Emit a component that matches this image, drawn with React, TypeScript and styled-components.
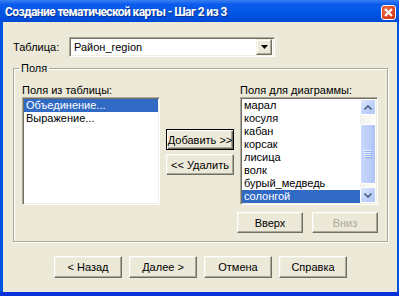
import React from 'react';
import styled, { createGlobalStyle } from 'styled-components';

const GlobalStyle = createGlobalStyle`
  html, body {
    margin: 0;
    padding: 0;
    background: #ffffff;
  }
  body {
    font-family: "Liberation Sans", Arial, sans-serif;
    font-size: 11px;
    color: #000;
  }
  * { box-sizing: border-box; }
`;

const Window = styled.div`
  width: 399px;
  height: 296px;
  display: flex;
  flex-direction: column;
  background: #0052e0;
  border-bottom: 4px solid #0831d9;
`;

const TitleBar = styled.div`
  height: 22px;
  display: flex;
  align-items: center;
  padding: 2px 2px 0 5px;
  background: linear-gradient(#3a80f3 0%, #0b5ced 20%, #0055e5 60%, #0048d6 100%);
  color: #ffffff;
  font-family: Roboto, "Liberation Sans", sans-serif;
  font-weight: bold;
  font-size: 12px;
  letter-spacing: -0.6px;
  text-shadow: 1px 1px #0a2f8e;
`;

const TitleText = styled.span`
  flex: 1;
  white-space: nowrap;
`;

const CloseButton = styled.div`
  width: 15px;
  height: 15px;
  margin-right: 1px;
  border: 1px solid #ffffff;
  border-radius: 3px;
  background: radial-gradient(circle at 35% 35%, #ec7a58, #dd4420 55%, #bf3410);
  display: flex;
  align-items: center;
  justify-content: center;
`;

const Client = styled.div`
  flex: 1;
  margin: 0 2px 0 3px;
  background: #ece9d8;
  display: flex;
  flex-direction: column;
  padding: 15px 9px 0 10px;
`;

const TableRow = styled.div`
  display: flex;
  align-items: center;
  height: 20px;
`;

const FieldLabel = styled.span`
  width: 56px;
  line-height: 13px;
`;

const Combo = styled.div`
  width: 206px;
  height: 20px;
  display: flex;
  align-items: center;
  background: #ffffff;
  border: 1px solid;
  border-color: #aca899 #ffffff #ffffff #aca899;
  box-shadow: inset 1px 1px #716f64, inset -1px -1px #f1efe2;
  padding: 0 2px 0 4px;
`;

const ComboText = styled.span`
  flex: 1;
`;

const ComboArrow = styled.div`
  width: 16px;
  height: 16px;
  background: #ece9d8;
  border: 1px solid;
  border-color: #f1efe2 #716f64 #716f64 #f1efe2;
  box-shadow: inset -1px -1px #aca899, inset 1px 1px #ffffff;
  display: flex;
  align-items: center;
  justify-content: center;
`;

const Group = styled.fieldset`
  margin: 5px 0 0 0;
  padding: 9px 8px 8px 8px;
  border: 1px solid #aca899;
  box-shadow: 1px 1px #ffffff, inset 1px 1px #ffffff;
  min-width: 0;
`;

const Legend = styled.legend`
  padding: 0 2px;
  margin-left: -3px;
  line-height: 13px;
`;

const GroupGrid = styled.div`
  display: grid;
  grid-template-columns: 138px 68px 138px;
  column-gap: 6px;
`;

const Column = styled.div`
  display: flex;
  flex-direction: column;
`;

const ColumnLabel = styled.div`
  line-height: 13px;
  height: 13px;
  white-space: nowrap;
`;

const ListBox = styled.div`
  height: 108px;
  display: flex;
  background: #ffffff;
  border: 1px solid;
  border-color: #aca899 #ffffff #ffffff #aca899;
  box-shadow: inset 1px 1px #716f64, inset -1px -1px #f1efe2;
  padding: 1px;
`;

const Items = styled.div`
  flex: 1;
  display: flex;
  flex-direction: column;
`;

const Item = styled.div<{ $selected?: boolean }>`
  height: 13px;
  line-height: 13px;
  padding: 0 2px;
  white-space: nowrap;
  background: ${(p) => (p.$selected ? '#316ac5' : 'transparent')};
  color: ${(p) => (p.$selected ? '#ffffff' : '#000000')};
`;

const ScrollBar = styled.div`
  width: 16px;
  display: flex;
  flex-direction: column;
  background: linear-gradient(90deg, #f3f1ec, #fefefb);
`;

const ScrollArrow = styled.div`
  width: 16px;
  height: 16px;
  border: 1px solid #ffffff;
  border-radius: 2px;
  background: linear-gradient(135deg, #dce6fd, #c1d3fb 50%, #b4c8f6);
  display: flex;
  align-items: center;
  justify-content: center;
`;

const Thumb = styled.div`
  height: 60px;
  margin-top: 9px;
  margin-bottom: 3px;
  border: 1px solid #ffffff;
  border-radius: 2px;
  background: linear-gradient(90deg, #c9d8fc, #bccdf9 60%, #aec3f5);
  display: flex;
  align-items: center;
  justify-content: center;
`;

const Spacer = styled.div`
  flex: 1;
`;

const Button = styled.button<{ $default?: boolean; $width?: number }>`
  width: ${(p) => p.$width ?? 68}px;
  height: 21px;
  padding: 0;
  font-family: "Liberation Sans", Arial, sans-serif;
  font-size: 11px;
  background: #ece9d8;
  color: #000;
  border: 1px solid;
  border-color: ${(p) => (p.$default ? '#000000' : '#ffffff #716f64 #716f64 #ffffff')};
  box-shadow: ${(p) =>
    p.$default
      ? 'inset 1px 1px #ffffff, inset -1px -1px #716f64, inset -2px -2px #aca899'
      : 'inset -1px -1px #aca899, inset 1px 1px #f1efe2'};
  &:disabled {
    color: #aca899;
  }
`;

const MiddleButtons = styled.div`
  display: flex;
  flex-direction: column;
  gap: 4px;
  padding-top: 45px;
`;

const RightButtons = styled.div`
  display: flex;
  justify-content: flex-end;
  gap: 9px;
  margin-top: 7px;
  margin-left: -4px;
`;

const Footer = styled.div`
  display: flex;
  justify-content: center;
  gap: 7px;
  margin-top: 14px;
`;

const FooterButton = styled(Button)`
  height: 22px;
`;

const Chevron = ({ down }: { down?: boolean }) => (
  <svg width="8" height="5" viewBox="0 0 8 5">
    <path
      d={down ? 'M0.5 0.5 L4 4 L7.5 0.5' : 'M0.5 4.5 L4 1 L7.5 4.5'}
      fill="none"
      stroke="#4d6185"
      strokeWidth="1.6"
    />
  </svg>
);

const Grip = () => (
  <svg width="8" height="8" viewBox="0 0 8 8">
    {[0, 2, 4, 6].map((y) => (
      <g key={y}>
        <line x1="0" y1={y + 0.5} x2="7" y2={y + 0.5} stroke="#eef4fe" />
        <line x1="1" y1={y + 1.5} x2="8" y2={y + 1.5} stroke="#8cb0f8" />
      </g>
    ))}
  </svg>
);

const sourceFields = ['Объединение...', 'Выражение...'];
const chartFields = ['марал', 'косуля', 'кабан', 'корсак', 'лисица', 'волк', 'бурый_медведь', 'солонгой'];

export default function App() {
  return (
    <>
      <GlobalStyle />
      <Window>
        <TitleBar>
          <TitleText>Создание тематической карты - Шаг 2 из 3</TitleText>
          <CloseButton>
            <svg width="9" height="9" viewBox="0 0 9 9">
              <path d="M1 1 L8 8 M8 1 L1 8" stroke="#ffffff" strokeWidth="2" />
            </svg>
          </CloseButton>
        </TitleBar>
        <Client>
          <TableRow>
            <FieldLabel>Таблица:</FieldLabel>
            <Combo>
              <ComboText>Район_region</ComboText>
              <ComboArrow>
                <svg width="7" height="4" viewBox="0 0 7 4">
                  <path d="M0 0 H7 L3.5 4 Z" fill="#000" />
                </svg>
              </ComboArrow>
            </Combo>
          </TableRow>
          <Group>
            <Legend>Поля</Legend>
            <GroupGrid>
              <Column>
                <ColumnLabel>Поля из таблицы:</ColumnLabel>
                <ListBox>
                  <Items>
                    {sourceFields.map((f, i) => (
                      <Item key={f} $selected={i === 0}>{f}</Item>
                    ))}
                  </Items>
                </ListBox>
              </Column>
              <MiddleButtons>
                <Button $default>Добавить &gt;&gt;</Button>
                <Button>&lt;&lt; Удалить</Button>
              </MiddleButtons>
              <Column>
                <ColumnLabel>Поля для диаграммы:</ColumnLabel>
                <ListBox>
                  <Items>
                    {chartFields.map((f, i) => (
                      <Item key={f} $selected={i === chartFields.length - 1}>{f}</Item>
                    ))}
                  </Items>
                  <ScrollBar>
                    <ScrollArrow>
                      <Chevron />
                    </ScrollArrow>
                    <Thumb>
                      <Grip />
                    </Thumb>
                    <Spacer />
                    <ScrollArrow>
                      <Chevron down />
                    </ScrollArrow>
                  </ScrollBar>
                </ListBox>
                <RightButtons>
                  <Button $width={66}>Вверх</Button>
                  <Button $width={66} disabled>Вниз</Button>
                </RightButtons>
              </Column>
            </GroupGrid>
          </Group>
          <Footer>
            <FooterButton>&lt; Назад</FooterButton>
            <FooterButton>Далее &gt;</FooterButton>
            <FooterButton>Отмена</FooterButton>
            <FooterButton>Справка</FooterButton>
          </Footer>
        </Client>
      </Window>
    </>
  );
}
